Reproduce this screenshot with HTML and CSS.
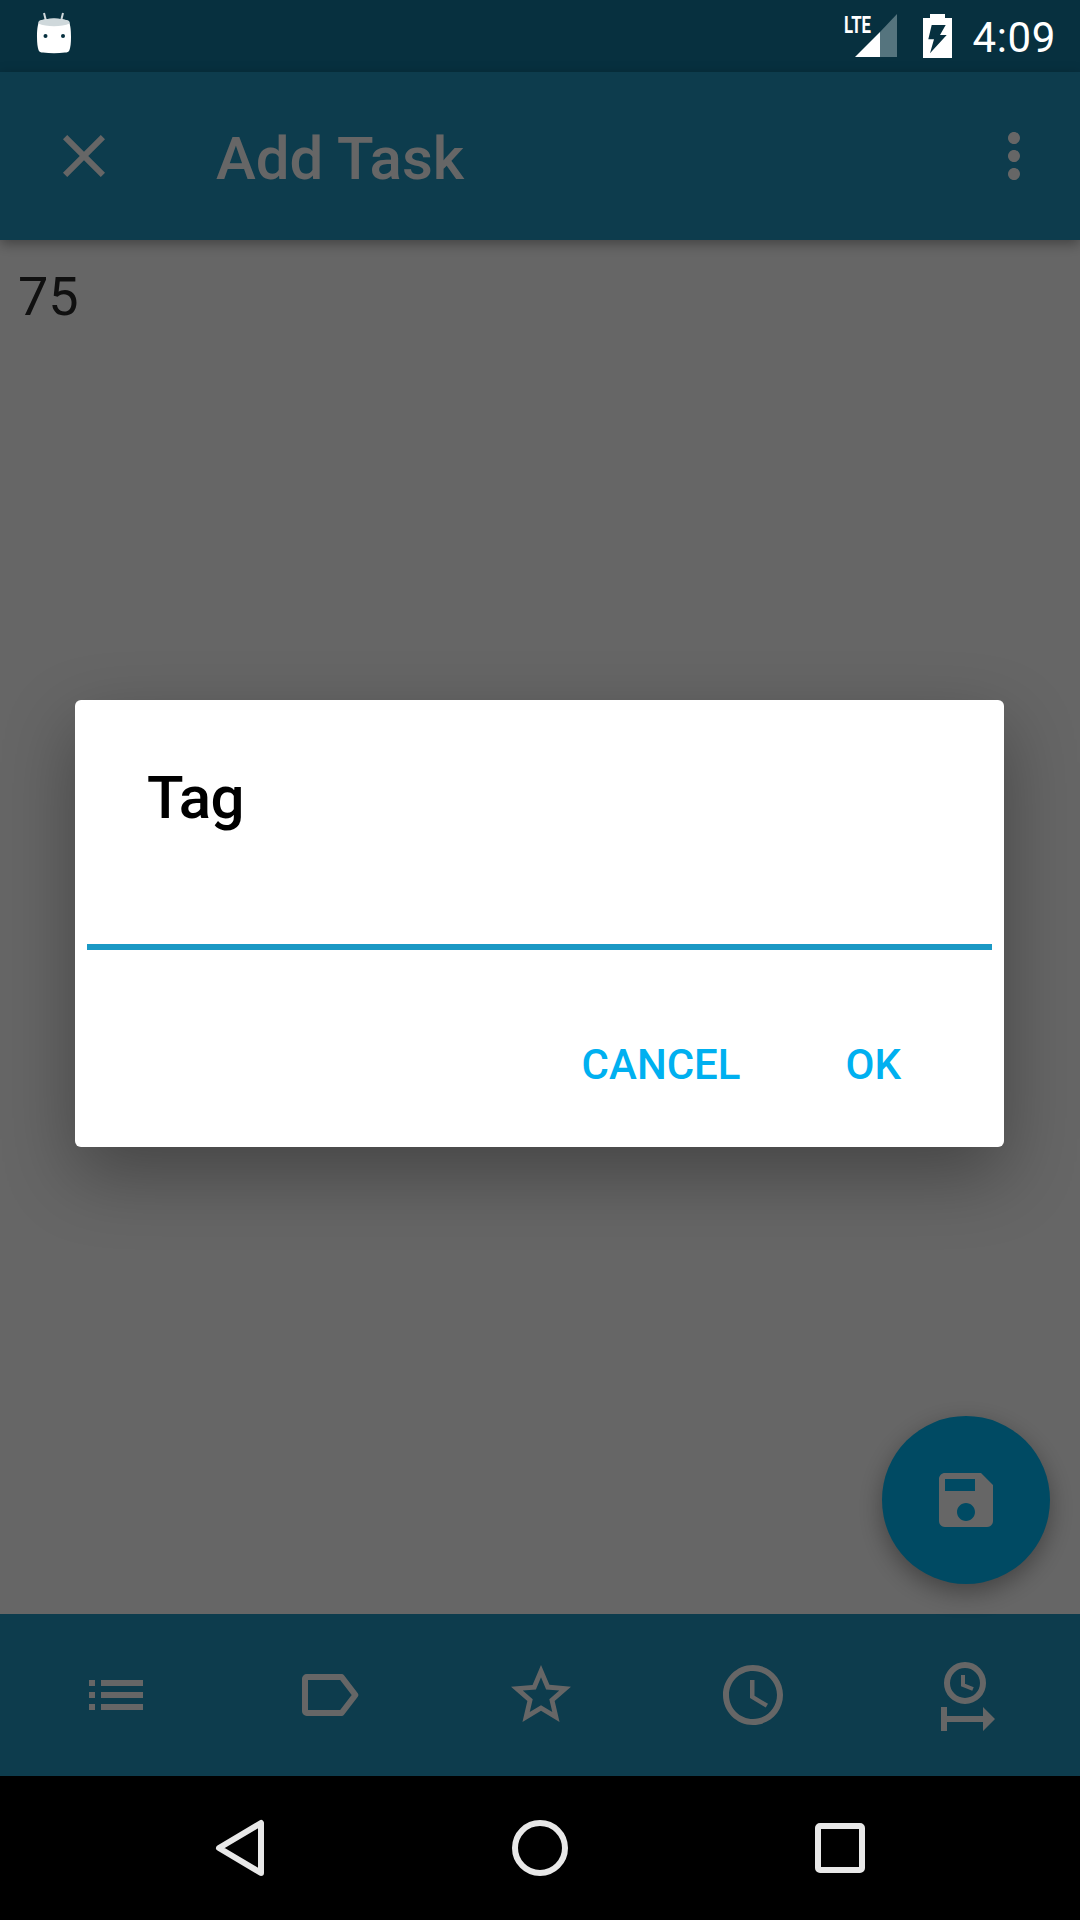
FILE: index.html
```html
<!DOCTYPE html>
<html lang="en">
<head>
    <meta charset="UTF-8">
    <meta name="viewport" content="width=device-width, initial-scale=1.0">
    <title>Add Task</title>
    <link rel="stylesheet" href="styles.css">
</head>
<body>
    <div class="status-bar">
        <svg class="status-app" width="40" height="48" viewBox="0 0 40 48">
            <path class="app-antenna" d="M10 1l2 8M29 1l-2 8"/>
            <path class="app-body" d="M5 9C12 5.500 28 5.500 35 9C36.500 14 37 18 37 25C37 31 36.500 35 35.500 38C35 40 33 40.500 31 40.500C24 41.500 16 41.500 9 40.500C7 40.500 5 40 4.500 38C3.500 35 3 31 3 25C3 18 3.500 14 5 9z"/>
            <path class="app-top" d="M5 9C12 5.500 28 5.500 35 9l.6 2.500C28 15 12 15 4.400 11.500z"/>
            <circle class="app-eye" cx="11.500" cy="24" r="2"/>
            <circle class="app-eye" cx="29" cy="24" r="2"/>
        </svg>
        <div class="status-right">
            <svg class="status-signal" width="53" height="48" viewBox="0 0 53 48">
                <text class="lte-text" x="0" y="24" textLength="27" lengthAdjust="spacingAndGlyphs">LTE</text>
                <polygon class="signal-dim" points="36,48 53,48 53,5 36,23"/>
                <polygon class="signal-on" points="11,48 36,48 36,23"/>
            </svg>
            <svg class="status-battery" width="29" height="44" viewBox="0 0 29 44">
                <path class="battery-body" d="M7 0h15v4h7v40H0V4h7z"/>
                <polygon class="battery-bolt" points="8.700,11 22.700,11 17,21 23.700,21 7,39.300 11,25.300 5.300,25.300"/>
            </svg>
            <span class="status-time">4:09</span>
        </div>
    </div>

    <div class="app">
        <header class="toolbar">
            <svg class="icon" viewBox="0 0 24 24"><path d="M19 6.410L17.590 5 12 10.590 6.410 5 5 6.410 10.590 12 5 17.590 6.410 19 12 13.410 17.590 19 19 17.590 13.410 12z"/></svg>
            <h1 class="toolbar-title">Add Task</h1>
            <svg class="icon" viewBox="0 0 24 24"><path d="M12 8c1.100 0 2-.9 2-2s-.9-2-2-2-2 .9-2 2 .9 2 2 2zm0 2c-1.100 0-2 .9-2 2s.9 2 2 2 2-.9 2-2-.9-2-2-2zm0 6c-1.100 0-2 .9-2 2s.9 2 2 2 2-.9 2-2-.9-2-2-2z"/></svg>
        </header>

        <main class="content">
            <p class="task-text">75</p>
            <button class="fab" type="button">
                <svg class="icon" viewBox="0 0 24 24"><path d="M17 3H5c-1.110 0-2 .9-2 2v14c0 1.100.89 2 2 2h14c1.100 0 2-.9 2-2V7l-4-4zm-5 16c-1.660 0-3-1.340-3-3s1.340-3 3-3 3 1.340 3 3-1.340 3-3 3zm3-10H5V5h10v4z"/></svg>
            </button>
        </main>

        <nav class="bottom-bar">
            <div class="tab">
                <svg class="icon" viewBox="0 0 24 24"><path d="M3 13h2v-2H3v2zm0 4h2v-2H3v2zm0-8h2V7H3v2zm4 4h14v-2H7v2zm0 4h14v-2H7v2zM7 7v2h14V7H7z"/></svg>
            </div>
            <div class="tab">
                <svg class="icon" viewBox="0 0 24 24"><path class="outline" d="M4.600 6H16.200L20.800 12L16.200 18H4.600a.6.6 0 0 1-.6-.6V6.600a.6.6 0 0 1 .6-.6z"/></svg>
            </div>
            <div class="tab">
                <svg class="icon" viewBox="0 0 24 24"><path d="M22 9.240l-7.190-.62L12 2 9.190 8.630 2 9.240l5.460 4.730L5.820 21 12 17.270 18.180 21l-1.630-7.030L22 9.240zM12 15.400l-3.760 2.270 1-4.280-3.320-2.880 4.380-.38L12 6.100l1.710 4.040 4.380.38-3.320 2.880 1 4.280L12 15.400z"/></svg>
            </div>
            <div class="tab">
                <svg class="icon" viewBox="0 0 24 24"><path d="M11.990 2C6.470 2 2 6.480 2 12s4.470 10 9.990 10C17.520 22 22 17.520 22 12S17.520 2 11.990 2zM12 20c-4.420 0-8-3.580-8-8s3.580-8 8-8 8 3.580 8 8-3.580 8-8 8z"/><path d="M12.500 7H11v6l5.250 3.150.75-1.230-4.500-2.670z"/></svg>
            </div>
            <div class="tab">
                <svg class="icon" viewBox="0 0 72 72">
                    <circle class="outline-thick" cx="35" cy="24" r="18"/>
                    <path class="clock-hand" d="M33 16v10l10 4"/>
                    <path d="M11 48h6v9h36v-9l12 12-12 12v-9H17v9h-6z"/>
                </svg>
            </div>
        </nav>

        <div class="scrim">
            <div class="dialog">
                <h2 class="dialog-title">Tag</h2>
                <div class="dialog-input"></div>
                <div class="dialog-actions">
                    <button class="dialog-btn" type="button">CANCEL</button>
                    <button class="dialog-btn" type="button">OK</button>
                </div>
            </div>
        </div>
    </div>

    <div class="nav-bar">
        <svg class="nav-icon" viewBox="0 0 60 60"><polygon points="9,30 51,5 51,55"/></svg>
        <svg class="nav-icon" viewBox="0 0 60 60"><circle cx="30" cy="30" r="25"/></svg>
        <svg class="nav-icon" viewBox="0 0 60 60"><rect x="8" y="8" width="44" height="44" rx="2"/></svg>
    </div>
</body>
</html>
```

FILE: styles.css
```css
* {
    box-sizing: border-box;
}

html, body {
    margin: 0;
    height: 1920px;
}

body {
    width: 1080px;
    display: flex;
    flex-direction: column;
    font-family: Roboto, "Liberation Sans", sans-serif;
    background-color: #fff;
    overflow: hidden;
}

/* status bar */
.status-bar {
    height: 72px;
    flex: none;
    display: flex;
    align-items: center;
    justify-content: space-between;
    padding: 0 24px 0 34px;
    background-color: #07303f;
    color: #fff;
}

.status-right {
    display: flex;
    align-items: center;
}

.status-signal {
    margin: -6px 26px 0 0;
    overflow: visible;
}

.lte-text {
    font-size: 24px;
    font-weight: 700;
    fill: #fff;
}

.signal-on {
    fill: #fff;
}

.signal-dim {
    fill: #55747e;
}

.battery-body {
    fill: #fff;
}

.battery-bolt {
    fill: #07303f;
}

.status-time {
    margin-left: 21px;
    padding-top: 4px;
    font-size: 42px;
    line-height: 48px;
    letter-spacing: 0.6px;
}

.app-antenna {
    fill: none;
    stroke: #cfd8db;
    stroke-width: 2;
}

.app-body {
    fill: #fff;
}

.app-top {
    fill: #cfd8db;
}

.app-eye {
    fill: #07303f;
}

/* app under the dialog */
.app {
    position: relative;
    flex: 1;
    display: flex;
    flex-direction: column;
    min-height: 0;
}

.icon {
    width: 72px;
    height: 72px;
    flex: none;
    fill: #fff;
}

.outline {
    fill: none;
    stroke: #fff;
    stroke-width: 2;
    stroke-linejoin: round;
}

.outline-thick {
    fill: none;
    stroke: #fff;
    stroke-width: 6;
}

.clock-hand {
    fill: none;
    stroke: #fff;
    stroke-width: 4;
}

.toolbar {
    position: relative;
    z-index: 1;
    height: 168px;
    flex: none;
    display: flex;
    align-items: center;
    padding: 0 30px 0 48px;
    background-color: #2196c0;
    box-shadow: 0 4px 12px rgba(0, 0, 0, 0.35);
}

.toolbar-title {
    flex: 1;
    margin: 5px 0 0 96px;
    font-size: 60px;
    font-weight: 500;
    line-height: 72px;
    color: #fff;
}

.content {
    position: relative;
    flex: 1;
    padding: 24px 18px;
    background-color: #fff;
}

.task-text {
    margin: 0;
    font-size: 54px;
    line-height: 66px;
    color: #2a2a2a;
}

.fab {
    position: absolute;
    right: 30px;
    bottom: 30px;
    width: 168px;
    height: 168px;
    display: flex;
    align-items: center;
    justify-content: center;
    padding: 0;
    border: none;
    border-radius: 50%;
    background-color: #00b9f7;
    box-shadow: 0 8px 24px rgba(0, 0, 0, 0.35);
}

.bottom-bar {
    height: 162px;
    flex: none;
    display: flex;
    align-items: center;
    padding: 0 8px 0 10px;
    background-color: #2196c0;
}

.tab {
    flex: 1;
    display: flex;
    justify-content: center;
}

/* dialog */
.scrim {
    position: absolute;
    inset: 0;
    z-index: 2;
    display: flex;
    align-items: center;
    justify-content: center;
    padding: 0 1px 1px 0;
    background-color: rgba(0, 0, 0, 0.6);
}

.dialog {
    width: 929px;
    height: 447px;
    padding-top: 62px;
    border-radius: 6px;
    background-color: #fff;
    box-shadow: 0 27px 72px rgba(0, 0, 0, 0.33);
}

.dialog-title {
    margin: 0;
    padding-left: 72px;
    font-size: 60px;
    font-weight: 500;
    line-height: 72px;
    letter-spacing: -0.8px;
    color: #000;
}

.dialog-input {
    height: 6px;
    margin: 110px 12px 0;
    background-color: #1b99c5;
}

.dialog-actions {
    display: flex;
    justify-content: flex-end;
    gap: 105px;
    margin-top: 91px;
    padding-right: 103px;
}

.dialog-btn {
    padding: 0;
    border: none;
    background: none;
    font-family: inherit;
    font-size: 42px;
    font-weight: 500;
    line-height: 48px;
    color: #00b0f0;
}

/* system nav */
.nav-bar {
    height: 144px;
    flex: none;
    display: grid;
    grid-template-columns: repeat(3, 1fr);
    align-items: center;
    justify-items: center;
    padding: 0 90px;
    background-color: #000;
}

.nav-icon {
    width: 60px;
    height: 60px;
    fill: none;
    stroke: #e8e8e8;
    stroke-width: 6;
    stroke-linejoin: round;
}
```
